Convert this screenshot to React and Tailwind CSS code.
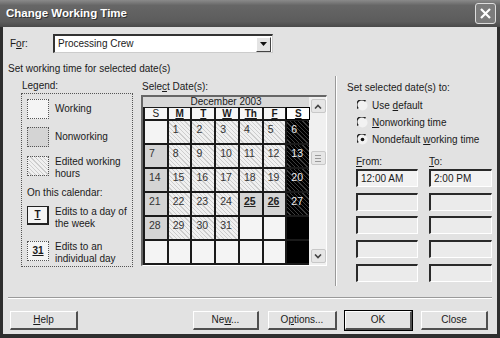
import React from 'react';

const cells = [
    [['', 'w'], ['1', 'h'], ['2', 'h'], ['3', 'h'], ['4', 'h'], ['5', 'h'], ['6', 's']],
    [['7', 'n'], ['8', 'h'], ['9', 'h'], ['10', 'h'], ['11', 'h'], ['12', 'h'], ['13', 's']],
    [['14', 'n'], ['15', 'h'], ['16', 'h'], ['17', 'h'], ['18', 'h'], ['19', 'h'], ['20', 's']],
    [['21', 'n'], ['22', 'h'], ['23', 'h'], ['24', 'h'], ['25', 'nb'], ['26', 'nb'], ['27', 's']],
    [['28', 'n'], ['29', 'h'], ['30', 'h'], ['31', 'h'], ['', 'w'], ['', 'w'], ['', 'b']],
    [['', 'w'], ['', 'w'], ['', 'w'], ['', 'w'], ['', 'w'], ['', 'w'], ['', 'b']],
];

const cellStyle = {
    w: 'bg-[#f4f4f4] text-[#333]',
    n: 'bg-[#d4d4d4] text-[#333]',
    nb: 'bg-[#d4d4d4] text-[#222] font-bold underline',
    h: 'bg-[#eeeeee] bg-[image:repeating-linear-gradient(45deg,#f0f0f0_0px,#f0f0f0_2px,#cdcdcd_2px,#cdcdcd_3px)] text-[#333]',
    s: 'bg-black bg-[image:repeating-linear-gradient(45deg,#000_0px,#000_2px,#3c3c3c_2px,#3c3c3c_3px)] text-[#eee]',
    b: 'bg-black',
};

const days = [
    ['S', false],
    ['M', true],
    ['T', true],
    ['W', true],
    ['Th', true],
    ['F', true],
    ['S', true],
];

const Radio = ({ checked }) => (
    <svg width="11" height="11" viewBox="0 0 11 11">
        <circle cx="5.5" cy="5.5" r="5" fill="#f2f2f2" />
        <path d="M1.2 8.5 A5 5 0 0 1 8.5 1.2" fill="none" stroke="#222" strokeWidth="1.4" />
        {checked && <circle cx="5.5" cy="5.5" r="1.8" fill="#111" />}
    </svg>
);

const Btn = ({ children, w, def }) => (
    <div className={`${w} h-[19px] flex items-center justify-center bg-[#e4e4e4] border-t border-l border-t-white border-l-white border-r-2 border-b-2 border-r-[#505050] border-b-[#505050] ${def ? 'outline outline-1 outline-black' : ''}`}>
        {children}
    </div>
);

const Field = ({ text, first }) => (
    <div className={`h-[18px] pl-[3px] flex items-center border-t-2 border-l-2 border-t-[#2a2a2a] border-l-[#2a2a2a] border-r border-b border-r-white border-b-white ${first ? 'bg-[#f2f2f2]' : 'bg-[#ebebeb]'}`}>
        {text}
    </div>
);

export default function App() {
    return (
        <div className="w-[500px] h-[338px] bg-[#2e2e2e] flex flex-col font-['Liberation_Sans',Arial,sans-serif] text-[10px] text-[#1a1a1a] leading-none">
            {/* title bar */}
            <div className="h-[27px] shrink-0 flex items-center justify-between pl-[6px] pr-[4px] bg-[linear-gradient(#8a8a8a,#666_20%,#5c5c5c_80%,#4a4a4a)]">
                <span className="text-white font-bold text-[11.5px] [text-shadow:1px_1px_0_#333]">Change Working Time</span>
                <div className="w-[21px] h-[21px] rounded-[3px] border border-[#ddd] bg-[#7c7c7c] flex items-center justify-center">
                    <svg width="13" height="13" viewBox="0 0 13 13">
                        <path d="M2 2 L11 11 M11 2 L2 11" stroke="#fff" strokeWidth="2.2" />
                    </svg>
                </div>
            </div>

            {/* body */}
            <div className="mx-[3px] mb-[4px] flex-1 bg-[#e2e2e2] flex flex-col">
                <div className="mt-[7px] h-[19px] flex items-center">
                    <span className="ml-[7px] w-[43px]">F<span className="underline">o</span>r:</span>
                    <div className="w-[220px] h-[19px] bg-white border-t-2 border-l-2 border-t-[#333] border-l-[#333] border-r border-b border-r-[#ccc] border-b-[#ccc] flex items-center justify-between">
                        <span className="pl-[3px]">Processing Crew</span>
                        <div className="w-[15px] h-[15px] mr-[1px] bg-[#e4e4e4] border-t border-l border-white border-r border-b border-r-[#444] border-b-[#444] flex items-center justify-center">
                            <svg width="7" height="4" viewBox="0 0 7 4"><path d="M0 0 H7 L3.5 4 Z" fill="#111" /></svg>
                        </div>
                    </div>
                </div>

                <div className="mt-[11px] ml-[5px]">Set working time for selected date(s)</div>

                <div className="mt-[7px] flex">
                    {/* legend */}
                    <div className="ml-[18px] w-[112px] flex flex-col">
                        <div className="h-[10px] ml-[1px]">Legend:</div>
                        <div className="mt-[2px] h-[174px] border border-dotted border-[#555] flex flex-col pl-[5px] pt-[5px] whitespace-nowrap">
                            <div className="flex items-center">
                                <div className="w-[22px] h-[20px] bg-[#f4f4f4] border border-dotted border-[#555]" />
                                <span className="ml-[6px]">Working</span>
                            </div>
                            <div className="mt-[8px] flex items-center">
                                <div className="w-[22px] h-[20px] bg-[#d4d4d4] border border-dotted border-[#555]" />
                                <span className="ml-[6px]">Nonworking</span>
                            </div>
                            <div className="mt-[9px] flex items-start">
                                <div className="w-[22px] h-[20px] border border-dotted border-[#555] bg-[image:repeating-linear-gradient(45deg,#f0f0f0_0px,#f0f0f0_2px,#cdcdcd_2px,#cdcdcd_3px)]" />
                                <span className="ml-[6px] leading-[12px]">Edited working<br />hours</span>
                            </div>
                            <div className="mt-[8px]">On this calendar:</div>
                            <div className="mt-[8px] flex items-start">
                                <div className="w-[22px] h-[19px] bg-[#f4f4f4] border border-[#222] border-b-2 border-r-2 flex items-center justify-center font-bold underline">T</div>
                                <span className="ml-[6px] leading-[12px]">Edits to a day of<br />the week</span>
                            </div>
                            <div className="mt-[11px] flex items-start">
                                <div className="w-[22px] h-[20px] bg-[#f4f4f4] border border-dotted border-[#555] flex items-center justify-center font-bold underline">31</div>
                                <span className="ml-[6px] leading-[12px]">Edits to an<br />individual day</span>
                            </div>
                        </div>
                    </div>

                    {/* calendar */}
                    <div className="ml-[8px] w-[186px] flex flex-col">
                        <div className="h-[13px] mt-[1px] ml-[1px]">Sele<span className="underline">c</span>t Date(s):</div>
                        <div className="h-[171px] border-t-2 border-l-2 border-t-[#666] border-l-[#666] border-r border-b border-r-white border-b-white flex bg-[#efefef]">
                            <div className="w-[167px] flex flex-col">
                                <div className="h-[13px] bg-[#d8d8d8] flex items-center justify-center">December 2003</div>
                                <div className="grid grid-cols-7 gap-[2px] bg-[#1a1a1a] border-l-2 border-t border-[#1a1a1a] pb-[2px]">
                                    {days.map(([d, edited], i) => (
                                        <div key={i} className={`h-[11px] flex items-center justify-center ${i === 6 ? 'bg-white outline outline-1 outline-black' : 'bg-[#f6f6f6]'} ${edited ? 'font-bold underline' : ''}`}>
                                            {d}
                                        </div>
                                    ))}
                                    {cells.flat().map(([n, t], i) => (
                                        <div key={'c' + i} className={`h-[22px] pl-[4px] pt-[3px] text-[10.5px] ${cellStyle[t]}`}>
                                            {n}
                                        </div>
                                    ))}
                                </div>
                            </div>
                            {/* scrollbar */}
                            <div className="w-[16px] ml-[1px] flex flex-col items-center bg-[#f0f0f0]">
                                <div className="mt-[2px] w-[15px] h-[14px] rounded-[2px] bg-[#e6e6e6] border border-[#c8c8c8] flex items-center justify-center">
                                    <svg width="8" height="5" viewBox="0 0 8 5"><path d="M1 4.5 L4 1.5 L7 4.5" fill="none" stroke="#444" strokeWidth="1.6" /></svg>
                                </div>
                                <div className="mt-[38px] w-[15px] h-[14px] rounded-[2px] bg-[#e6e6e6] border border-[#c8c8c8] flex flex-col items-center justify-center gap-[2px]">
                                    <div className="w-[6px] h-px bg-[#999]" />
                                    <div className="w-[6px] h-px bg-[#999]" />
                                    <div className="w-[6px] h-px bg-[#999]" />
                                </div>
                                <div className="mt-auto mb-[2px] w-[15px] h-[14px] rounded-[2px] bg-[#e6e6e6] border border-[#c8c8c8] flex items-center justify-center">
                                    <svg width="8" height="5" viewBox="0 0 8 5"><path d="M1 0.5 L4 3.5 L7 0.5" fill="none" stroke="#444" strokeWidth="1.6" /></svg>
                                </div>
                            </div>
                        </div>
                    </div>

                    {/* separator */}
                    <div className="ml-[8px] mt-[-5px] w-[2px] h-[210px] border-l border-l-[#9a9a9a] border-r border-r-white" />

                    {/* right panel */}
                    <div className="ml-[10px] mt-[2px] flex flex-col">
                        <div className="h-[10px]">Set selected date(s) to:</div>
                        <div className="mt-[7px] ml-[10px] flex flex-col gap-[6px]">
                            <div className="flex items-center gap-[4px]"><Radio /><span>Use <span className="underline">d</span>efault</span></div>
                            <div className="flex items-center gap-[4px]"><Radio /><span><span className="underline">N</span>onworking time</span></div>
                            <div className="flex items-center gap-[4px]"><Radio checked /><span>Nondefault <span className="underline">w</span>orking time</span></div>
                        </div>
                        <div className="mt-[12px] ml-[9px] flex gap-[11px]">
                            <div className="w-[62px] flex flex-col">
                                <div className="h-[10px] mb-[2px]"><span className="underline">F</span>rom:</div>
                                <div className="flex flex-col gap-[5.7px]">
                                    <Field text="12:00 AM" first />
                                    <Field />
                                    <Field />
                                    <Field />
                                    <Field />
                                </div>
                            </div>
                            <div className="w-[63px] flex flex-col">
                                <div className="h-[10px] mb-[2px]"><span className="underline">T</span>o:</div>
                                <div className="flex flex-col gap-[5.7px]">
                                    <Field text="2:00 PM" first />
                                    <Field />
                                    <Field />
                                    <Field />
                                    <Field />
                                </div>
                            </div>
                        </div>
                    </div>
                </div>

                {/* bottom line */}
                <div className="mt-auto mx-[5px] h-[2px] border-t border-t-[#9a9a9a] border-b border-b-white" />

                {/* buttons */}
                <div className="mt-[12px] mb-[4px] flex items-center">
                    <div className="ml-[7px]"><Btn w="w-[68px]"><span><span className="underline">H</span>elp</span></Btn></div>
                    <div className="ml-auto"><Btn w="w-[66px]"><span>Ne<span className="underline">w</span>...</span></Btn></div>
                    <div className="ml-[9px]"><Btn w="w-[69px]"><span>O<span className="underline">p</span>tions...</span></Btn></div>
                    <div className="ml-[8px]"><Btn w="w-[67px]" def>OK</Btn></div>
                    <div className="ml-[9px] mr-[9px]"><Btn w="w-[67px]">Close</Btn></div>
                </div>
            </div>
        </div>
    );
}
